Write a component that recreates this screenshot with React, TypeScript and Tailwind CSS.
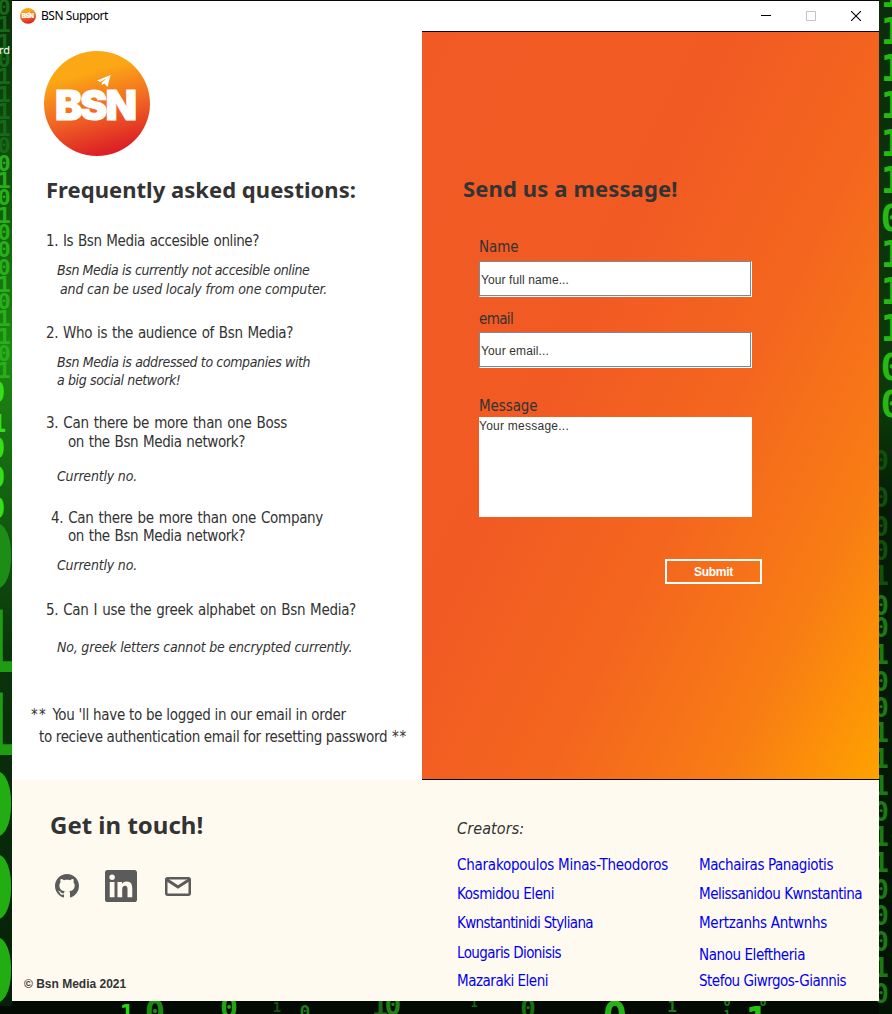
import type { ReactNode } from "react";
import { BsGithub } from "react-icons/bs";

const TAHOMA = "font-['DejaVu_Sans_Condensed','DejaVu_Sans',sans-serif]";
const HEADING = "font-['Noto_Sans',sans-serif] leading-7 font-bold text-[#333]";
const ARIAL = "font-['Liberation_Sans',sans-serif]";

function Logo({ className }: { className: string }) {
  return (
    <svg viewBox="0 0 106 106" className={className} aria-label="BSN">
      <defs>
        <linearGradient id="logo" x1="0.36" y1="0" x2="0.64" y2="1">
          <stop offset="0.2" stopColor="#fca814" />
          <stop offset="0.55" stopColor="#f26a22" />
          <stop offset="0.95" stopColor="#dc2026" />
        </linearGradient>
      </defs>
      <ellipse cx="53" cy="52.5" rx="53" ry="52.5" fill="url(#logo)" />
      <text
        x="11 36 61.5"
        y="69"
        fill="#fff"
        stroke="#fff"
        strokeWidth="1"
        fontFamily="Inter, sans-serif"
        fontWeight="900"
        fontSize="41"
      >
        BSN
      </text>
      <path d="M53 29.5 66.5 24 63.5 36 60.5 32.5 57.5 34 58 31.5 63 27 56.5 31Z" fill="#fff" />
    </svg>
  );
}

const RIGHT_TOP: [string, number][] = [
  ["1", 7], ["1", 44], ["1", 81], ["1", 118], ["1", 156], ["1", 193],
  ["0", 231], ["1", 267], ["1", 304], ["1", 341], ["0", 380], ["0", 417],
];
const RIGHT_LOW: [string, number][] = [
  ["0", 470], ["0", 507], ["0", 536], ["0", 560], ["1", 585], ["0", 615], ["0", 637],
  ["1", 664], ["0", 691], ["0", 717], ["1", 742], ["1", 768], ["1", 795], ["0", 821],
  ["1", 846], ["1", 872], ["0", 899], ["0", 925], ["0", 951], ["1", 977], ["0", 1003],
];
const LEFT_TOP = "0110111100101000101101";
const BOTTOM: [string, number, number, number, string][] = [
  ["1", 127, 1022, 24, "#2bd514"], ["0", 155, 1024, 34, "#1c8a12"], ["0", 229, 1018, 30, "#24a516"],
  ["1", 277, 1012, 14, "#175015"], ["0", 305, 1018, 18, "#237a1c"], ["1", 380, 1016, 28, "#1c6c14"],
  ["0", 393, 1015, 28, "#218016"], ["1", 474, 1007, 12, "#17601a"], ["0", 528, 1018, 26, "#187011"],
  ["0", 615, 1032, 42, "#27b317"], ["1", 672, 1012, 16, "#1d7a1a"], ["0", 727, 1006, 12, "#1f7a1c"],
  ["1", 727, 1019, 12, "#1f7a1c"], ["0", 763, 1006, 12, "#1f7a1c"], ["1", 757, 1033, 38, "#25c312"],
];

function Wallpaper() {
  return (
    <svg
      viewBox="0 0 892 1014"
      className="absolute inset-0 h-[1014px] w-[892px]"
      fontFamily="'DejaVu Sans Mono', monospace"
      fontWeight="700"
      textAnchor="middle"
      aria-hidden="true"
    >
      <defs>
        <linearGradient id="edgeL" x1="0" y1="0" x2="0" y2="1">
          <stop offset="0" stopColor="#0b2d0b" />
          <stop offset="0.2" stopColor="#0f5a0c" />
          <stop offset="0.35" stopColor="#1d8a12" />
          <stop offset="0.5" stopColor="#126010" />
          <stop offset="0.65" stopColor="#0a330b" />
          <stop offset="1" stopColor="#062008" />
        </linearGradient>
        <linearGradient id="edgeR" x1="0" y1="0" x2="0" y2="1">
          <stop offset="0" stopColor="#0a2c0b" />
          <stop offset="0.4" stopColor="#0b3a0a" />
          <stop offset="0.5" stopColor="#041c06" />
          <stop offset="1" stopColor="#021304" />
        </linearGradient>
      </defs>
      <rect width="892" height="1014" fill="#020a03" />
      <rect width="12" height="1006" fill="url(#edgeL)" />
      <rect x="879" width="13" height="1014" fill="url(#edgeR)" />
      {LEFT_TOP.split("").map((d, i) => (
        <text key={i} x="4" y={15 + i * 17.3} fontSize="22" fill={i < 9 ? "#17691a" : "#28b01a"}>
          {d}
        </text>
      ))}
      <g fill="#33e01b">
        <text x="-3" y="402" fontSize="28">0</text>
        <text x="-1" y="432" fontSize="24">1</text>
        <text x="-3" y="458" fontSize="28">0</text>
        <text x="-3" y="487" fontSize="28">0</text>
        <text x="-3" y="518" fontSize="28">0</text>
      </g>
      <text x="-11" y="590" fontSize="92" fill="#1c8d16">0</text>
      <text x="-5" y="672" fontSize="86" fill="#1e9c12">1</text>
      <text x="-5" y="755" fontSize="86" fill="#1e9c12">1</text>
      <g fill="#22ad12">
        <text x="-11" y="838" fontSize="92">0</text>
        <text x="-11" y="921" fontSize="92">0</text>
        <text x="-11" y="1004" fontSize="92">0</text>
      </g>
      {RIGHT_TOP.map(([d, y]) => (
        <text key={y} x="892" y={y} fontSize="38" fill="#27b814">{d}</text>
      ))}
      {RIGHT_LOW.map(([d, y]) => (
        <text key={y} x="881" y={y} fontSize="26" fill={y < 600 ? "#10500f" : "#1b7a14"}>{d}</text>
      ))}
      {BOTTOM.map(([d, x, y, size, fill]) => (
        <text key={`${x}-${y}`} x={x} y={y} fontSize={size} fill={fill}>{d}</text>
      ))}
    </svg>
  );
}

const FAQ: { text: ReactNode; cls: string }[] = [
  { text: "1. Is Bsn Media accesible online?", cls: "mt-[29px] ml-[34px] text-[15px] tracking-[-0.42px] [word-spacing:1px]" },
  { text: "Bsn Media is currently not accesible online", cls: "mt-[11px] ml-[45px] text-[14px] italic tracking-[-0.4px]" },
  { text: "and can be used localy from one computer.", cls: "mt-px ml-[48px] text-[14px] italic tracking-[-0.16px]" },
  { text: "2. Who is the audience of Bsn Media?", cls: "mt-[26px] ml-[34px] text-[15px] tracking-[-0.367px] [word-spacing:1px]" },
  { text: "Bsn Media is addressed to companies with", cls: "mt-[11px] ml-[45px] text-[14px] italic tracking-[-0.38px]" },
  { text: "a big social network!", cls: "ml-[45px] text-[14px] italic tracking-[-0.37px]" },
  { text: "3. Can there be more than one Boss", cls: "mt-[25px] ml-[34px] text-[15px] tracking-[-0.292px] [word-spacing:1px]" },
  { text: "on the Bsn Media network?", cls: "mt-px ml-[56px] text-[15px] tracking-[-0.418px] [word-spacing:1px]" },
  { text: "Currently no.", cls: "mt-4 ml-[45px] text-[14px] italic tracking-[-0.19px]" },
  { text: "4. Can there be more than one Company", cls: "mt-6 ml-[39px] text-[15px] tracking-[-0.312px] [word-spacing:1px]" },
  { text: "on the Bsn Media network?", cls: "ml-[56px] text-[15px] tracking-[-0.418px] [word-spacing:1px]" },
  { text: "Currently no.", cls: "mt-[11px] ml-[45px] text-[14px] italic tracking-[-0.19px]" },
  { text: "5. Can I use the greek alphabet on Bsn Media?", cls: "mt-[27px] ml-[34px] text-[15px] tracking-[-0.308px] [word-spacing:1px]" },
  { text: "No, greek letters cannot be encrypted currently.", cls: "mt-[19px] ml-[45px] text-[14px] italic tracking-[-0.19px]" },
  {
    text: <><span className="tracking-[1.2px]">** </span>You 'll have to be logged in our email in order</>,
    cls: "mt-[50px] ml-[19px] text-[15px] tracking-[-0.285px]",
  },
  {
    text: <>to recieve authentication email for resetting password<span className="tracking-[0.7px]"> **</span></>,
    cls: "mt-1 ml-[27px] text-[15px] tracking-[-0.345px]",
  },
];

const CREATORS_LEFT = [
  { name: "Charakopoulos Minas-Theodoros", cls: "tracking-[-0.232px]" },
  { name: "Kosmidou Eleni", cls: "mt-[11px] tracking-[-0.417px]" },
  { name: "Kwnstantinidi Styliana", cls: "mt-[11px] tracking-[-0.635px]" },
  { name: "Lougaris Dionisis", cls: "mt-3 tracking-[-0.59px]" },
  { name: "Mazaraki Eleni", cls: "mt-[10px] tracking-[-0.487px]" },
];
const CREATORS_RIGHT = [
  { name: "Machairas Panagiotis", cls: "tracking-[-0.412px]" },
  { name: "Melissanidou Kwnstantina", cls: "mt-[11px] tracking-[-0.508px]" },
  { name: "Mertzanhs Antwnhs", cls: "mt-[11px] tracking-[-0.283px]" },
  { name: "Nanou Eleftheria", cls: "mt-[14px] tracking-[-0.424px]" },
  { name: "Stefou Giwrgos-Giannis", cls: "mt-2 tracking-[-0.508px]" },
];

function TitleBar() {
  return (
    <header className="flex h-[30px] items-center bg-white pl-2">
      <Logo className="size-4" />
      <span className="ml-[5px] font-['Noto_Sans',sans-serif] text-[12px] leading-5 tracking-[-0.45px] text-black">
        BSN Support
      </span>
      <div className="mr-[18px] ml-auto flex items-center gap-[35px]">
        <svg viewBox="0 0 10 10" className="size-[10px]"><path d="M0 4.5h10" stroke="#000" /></svg>
        <svg viewBox="0 0 10 10" className="-mt-px size-[10px]"><path d="M.5.5h9v9h-9z" stroke="#c4c4c4" fill="none" /></svg>
        <svg viewBox="0 0 10 10" className="-mt-px size-[10px]"><path d="m0 0 10 10M10 0 0 10" stroke="#000" strokeWidth="1.1" /></svg>
      </div>
    </header>
  );
}

const FIELD =
  `block h-9 w-[273px] border border-t-[#7a8a99] border-l-[#7a8a99] border-r-white border-b-white bg-white pt-[2px] pl-px text-[12px] text-[#333] shadow-[inset_-1px_-1px_0_#7a8a99] outline-none placeholder:text-[#333] placeholder:opacity-100 ${ARIAL}`;
const LABEL = "h-[18px] text-[15px] leading-[18px] text-[#333]";

function MessageForm() {
  return (
    <form className="flex w-[457px] flex-col border-y border-black bg-[linear-gradient(116.6deg,#f15a24_0%,#f15b23_38%,#f4661e_60%,#f87c14_81%,#ffa200_100%)] pl-[57px]">
      <h2 className={`mt-[142px] -ml-4 text-[22px] tracking-[0.126px] ${HEADING}`}>Send us a message!</h2>
      <label className={`mt-9 tracking-[-0.079px] ${LABEL}`}>Name</label>
      <input className={`mt-[5px] tracking-[0.1px] ${FIELD}`} placeholder="Your full name..." />
      <label className={`mt-[13px] tracking-[-0.644px] ${LABEL}`}>email</label>
      <input className={`mt-[4px] tracking-[0.134px] ${FIELD}`} placeholder="Your email..." />
      <label className={`mt-[29px] tracking-[-0.094px] ${LABEL}`}>Message</label>
      <textarea
        className={`mt-[2px] block h-[100px] w-[273px] resize-none bg-white p-0 text-[12px] leading-[19px] tracking-[0.25px] outline-none placeholder:text-[#333] placeholder:opacity-100 ${ARIAL}`}
        placeholder="Your message..."
      />
      <button
        type="button"
        className={`mt-[42px] ml-[186px] h-[25px] w-[97px] border-2 border-white text-[12px] leading-5 font-bold tracking-[-0.25px] text-white ${ARIAL}`}
      >
        Submit
      </button>
    </form>
  );
}

function Footer() {
  return (
    <footer className="flex h-[221px] bg-[#fffaf0]">
      <section className="flex w-[445px] flex-col">
        <h2 className={`mt-[31px] ml-[38px] text-[24px] ${HEADING}`}>Get in touch!</h2>
        <div className="mt-[31px] ml-[43px] flex h-8 items-center text-[#5b5b5b]">
          <BsGithub className="size-6" />
          <svg viewBox="0 0 24 24" className="ml-[26px] size-8" fill="currentColor">
            <path d="M20.45 20.45h-3.56v-5.57c0-1.33-.03-3.04-1.85-3.04-1.85 0-2.14 1.45-2.14 2.94v5.67H9.35V9h3.41v1.56h.05c.48-.9 1.64-1.85 3.37-1.85 3.6 0 4.27 2.37 4.27 5.46zM5.34 7.43a2.06 2.06 0 1 1 0-4.13 2.06 2.06 0 0 1 0 4.13zM7.12 20.45H3.56V9h3.56zM22.23 0H1.77C.79 0 0 .77 0 1.73v20.54C0 23.23.79 24 1.77 24h20.45c.98 0 1.78-.77 1.78-1.73V1.73C24 .77 23.2 0 22.22 0z" />
          </svg>
          <svg viewBox="0 0 26 19" className="mt-px ml-7 h-[19px] w-[26px]" fill="none" stroke="currentColor" strokeWidth="2.5">
            <rect x="1.25" y="1.25" width="23.5" height="16.5" rx="1.4" />
            <path d="m1.8 2.8 11.2 7.2 11.2-7.2" strokeWidth="3" />
          </svg>
        </div>
        <p className={`mt-auto mb-[7px] ml-3 text-[12px] leading-5 font-bold text-[#333] ${ARIAL}`}>© Bsn Media 2021</p>
      </section>
      <section className="flex flex-col">
        <h3 className="mt-10 text-[16px] leading-[18px] italic tracking-[0.1px] text-[#333]">Creators:</h3>
        <div className="mt-[18px] flex text-[15px] leading-[18px] whitespace-nowrap text-[#0000f0]">
          <ul className="w-[242px]">
            {CREATORS_LEFT.map((c) => <li key={c.name} className={c.cls}>{c.name}</li>)}
          </ul>
          <ul>
            {CREATORS_RIGHT.map((c) => <li key={c.name} className={c.cls}>{c.name}</li>)}
          </ul>
        </div>
      </section>
    </footer>
  );
}

export default function App() {
  return (
    <div className={`relative h-[1014px] w-[892px] overflow-hidden pt-px pl-3 ${TAHOMA}`}>
      <Wallpaper />
      <span className="absolute top-[41px] left-[-1px] font-['Noto_Sans',sans-serif] text-[11px] leading-[18px] text-white">rd</span>
      <main className="relative flex h-[1000px] w-[867px] flex-col bg-white">
        <TitleBar />
        <div className="flex h-[749px]">
          <section className="w-[410px] text-[#333]">
            <Logo className="mt-5 ml-8 size-[106px]" />
            <h1 className={`mt-[18px] ml-[34px] text-[22px] tracking-[0.036px] ${HEADING}`}>
              Frequently asked questions:
            </h1>
            {FAQ.map((line, i) => (
              <p key={i} className={`h-[18px] leading-[18px] whitespace-nowrap ${line.cls}`}>{line.text}</p>
            ))}
          </section>
          <MessageForm />
        </div>
        <Footer />
      </main>
    </div>
  );
}
